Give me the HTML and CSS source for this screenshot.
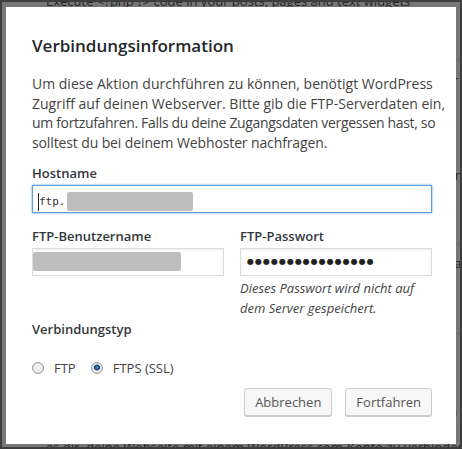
FILE: index.html
```html
<!DOCTYPE html>
<html lang="de">
<head>
<meta charset="utf-8">
<title>Verbindungsinformation</title>
<link rel="stylesheet" href="styles.css">
</head>
<body>
<div class="page">
  <div class="bg-row bg-first">Execute &lt;?php ?&gt; code in your posts, pages and text widgets</div>
  <div class="bg-row bg-second">Version 2.3 | Von Otto42 | Details ansehen und mehr erfahren über die Erweiterung Markdown Sync</div>
  <div class="bg-row bg-mid">Aktivieren | Bearbeiten | Löschen und weitere Optionen für diese Erweiterung hier in der Liste</div>
  <div class="bg-row bg-mid2">Akismet schützt deinen Blog vor Spam in Kommentaren und Trackbacks, wenn du ihn nicht</div>
  <div class="bg-row bg-mid3">Aktivieren | Bearbeiten | Löschen | Details und Informationen dazu findest du hier</div>
  <div class="bg-row bg-last">es dir, deine Webseite mit einem WordPress.com-Konto zu verbinden</div>
</div>

<div class="modal">
  <h2 class="modal-title">Verbindungsinformation</h2>
  <p class="modal-text">Um diese Aktion durchführen zu können, benötigt WordPress<br>Zugriff auf deinen Webserver. Bitte gib die FTP-Serverdaten ein,<br><span class="tight">um fortzufahren. Falls du deine Zugangsdaten vergessen hast, so</span><br><span class="tight-s">solltest du bei deinem Webhoster nachfragen.</span></p>

  <div class="group">
    <div class="label">Hostname</div>
    <div class="field focus host"><span class="caret"></span><span class="mono">ftp.</span><span class="redact redact-host"></span></div>
  </div>

  <div class="cols">
    <div class="col">
      <div class="label">FTP-Benutzername</div>
      <div class="field user"><span class="redact redact-user"></span></div>
    </div>
    <div class="col">
      <div class="label">FTP-Passwort</div>
      <div class="field pass"><span class="dots">●●●●●●●●●●●●●●●●</span></div>
      <div class="desc">Dieses Passwort wird nicht auf<br>dem Server gespeichert.</div>
    </div>
  </div>

  <div class="label type-label">Verbindungstyp</div>
  <div class="radios">
    <label class="opt"><input type="radio" name="t" class="radio"><span>FTP</span></label>
    <label class="opt"><input type="radio" name="t" class="radio" checked><span>FTPS (SSL)</span></label>
  </div>

  <div class="actions">
    <button class="btn">Abbrechen</button>
    <button class="btn">Fortfahren</button>
  </div>
</div>
</body>
</html>
```

FILE: styles.css
```css
html, body {
  margin: 0;
  padding: 0;
}
body {
  width: 462px;
  height: 449px;
  box-sizing: border-box;
  border: 2px solid #3e3e3e;
  background: #777777;
  overflow: hidden;
  position: relative;
  font-family: "Open Sans", "DejaVu Sans", sans-serif;
}

/* background page (dimmed by the overlay) */
.page {
  margin-top: -11px;
  padding-left: 44px;
  color: #262626;
  font-size: 13px;
  line-height: 20px;
  white-space: nowrap;
}
.bg-row {
  border-bottom: 1px solid #6a6a6a;
}
.bg-first {
  padding-bottom: 49px;
}
.bg-second {
  padding-top: 9px;
  border-bottom: none;
}
.bg-mid {
  padding-top: 75px;
  padding-bottom: 58px;
}
.bg-mid2 {
  padding-top: 9px;
  padding-bottom: 60px;
}
.bg-mid3 {
  padding-top: 68px;
  border-bottom: none;
}
.bg-last {
  padding-top: 15px;
  border-bottom: none;
}

/* modal */
.modal {
  position: absolute;
  left: 4px;
  top: 5px;
  width: 450px;
  height: 437px;
  box-sizing: border-box;
  background: #fff;
  padding: 27px 24px 0 26px;
  color: #444;
  font-size: 13px;
}
.modal-title {
  margin: 0;
  font-size: 17px;
  font-weight: 600;
  line-height: 24px;
  color: #23282d;
}
.modal-text {
  margin: 16px 0 0;
  font-size: 14px;
  line-height: 19.5px;
  white-space: nowrap;
}
.tight {
  letter-spacing: -0.33px;
}
.tight-s {
  letter-spacing: -0.12px;
}
.group {
  margin-top: 12px;
}
.label {
  font-weight: 600;
  line-height: 19px;
  margin-bottom: 2px;
  color: #32373c;
}
.field {
  height: 28px;
  box-sizing: border-box;
  border: 1px solid #ddd;
  background: #fff;
  box-shadow: inset 0 1px 2px rgba(0,0,0,.07);
  display: flex;
  align-items: center;
}
.field.focus {
  border-color: #5b9dd9;
  box-shadow: 0 0 2px rgba(30,140,190,.8);
}
.host {
  padding: 5px 0 0 5px;
}
.caret {
  width: 1px;
  height: 18px;
  background: #222;
}
.mono {
  font-family: "DejaVu Sans Mono", monospace;
  font-size: 11px;
  color: #333;
  line-height: 18px;
}
.redact {
  display: block;
  background: #bdbdbd;
  border-radius: 2px;
}
.redact-host {
  width: 126px;
  height: 19px;
  margin-left: 1px;
}
.user {
  padding: 0 0 2px 0;
}
.redact-user {
  width: 148px;
  height: 19px;
}
.pass {
  padding-left: 6px;
}
.dots {
  font-family: "DejaVu Sans", sans-serif;
  font-size: 8px;
  letter-spacing: 1px;
  color: #222;
  line-height: 18px;
}
.cols {
  display: grid;
  grid-template-columns: 192px 192px;
  column-gap: 16px;
  margin-top: 14px;
}
.desc {
  margin-top: 3px;
  font-style: italic;
  line-height: 19.5px;
  color: #444;
  white-space: nowrap;
}
.type-label {
  margin-top: 2px;
}
.radios {
  display: flex;
  gap: 15px;
  margin-top: 19px;
  line-height: 20px;
}
.opt {
  display: flex;
  align-items: center;
}
.radio {
  -webkit-appearance: none;
  appearance: none;
  width: 12px;
  height: 12px;
  margin: 0 10px 0 0;
  border-radius: 50%;
  border: 1px solid #9a9a9a;
  background: radial-gradient(circle at 50% 40%, #f6f6f6 0, #e4e4e4 70%, #d6d6d6 100%);
  box-sizing: border-box;
}
.radio:checked {
  background: radial-gradient(circle at 50% 45%, #5b8fc4 0, #1f5592 2px, #1a3f6a 2.7px, #e8e8e8 3.3px, #dedede 100%);
}
.actions {
  display: flex;
  justify-content: flex-end;
  gap: 13px;
  margin-top: 10px;
}
.btn {
  height: 28px;
  padding: 0 10px;
  border: 1px solid #ccc;
  border-radius: 3px;
  background: #f7f7f7;
  box-shadow: 0 1px 0 #ccc;
  color: #555;
  font-family: "Open Sans", sans-serif;
  font-size: 13px;
  line-height: 26px;
}
```
